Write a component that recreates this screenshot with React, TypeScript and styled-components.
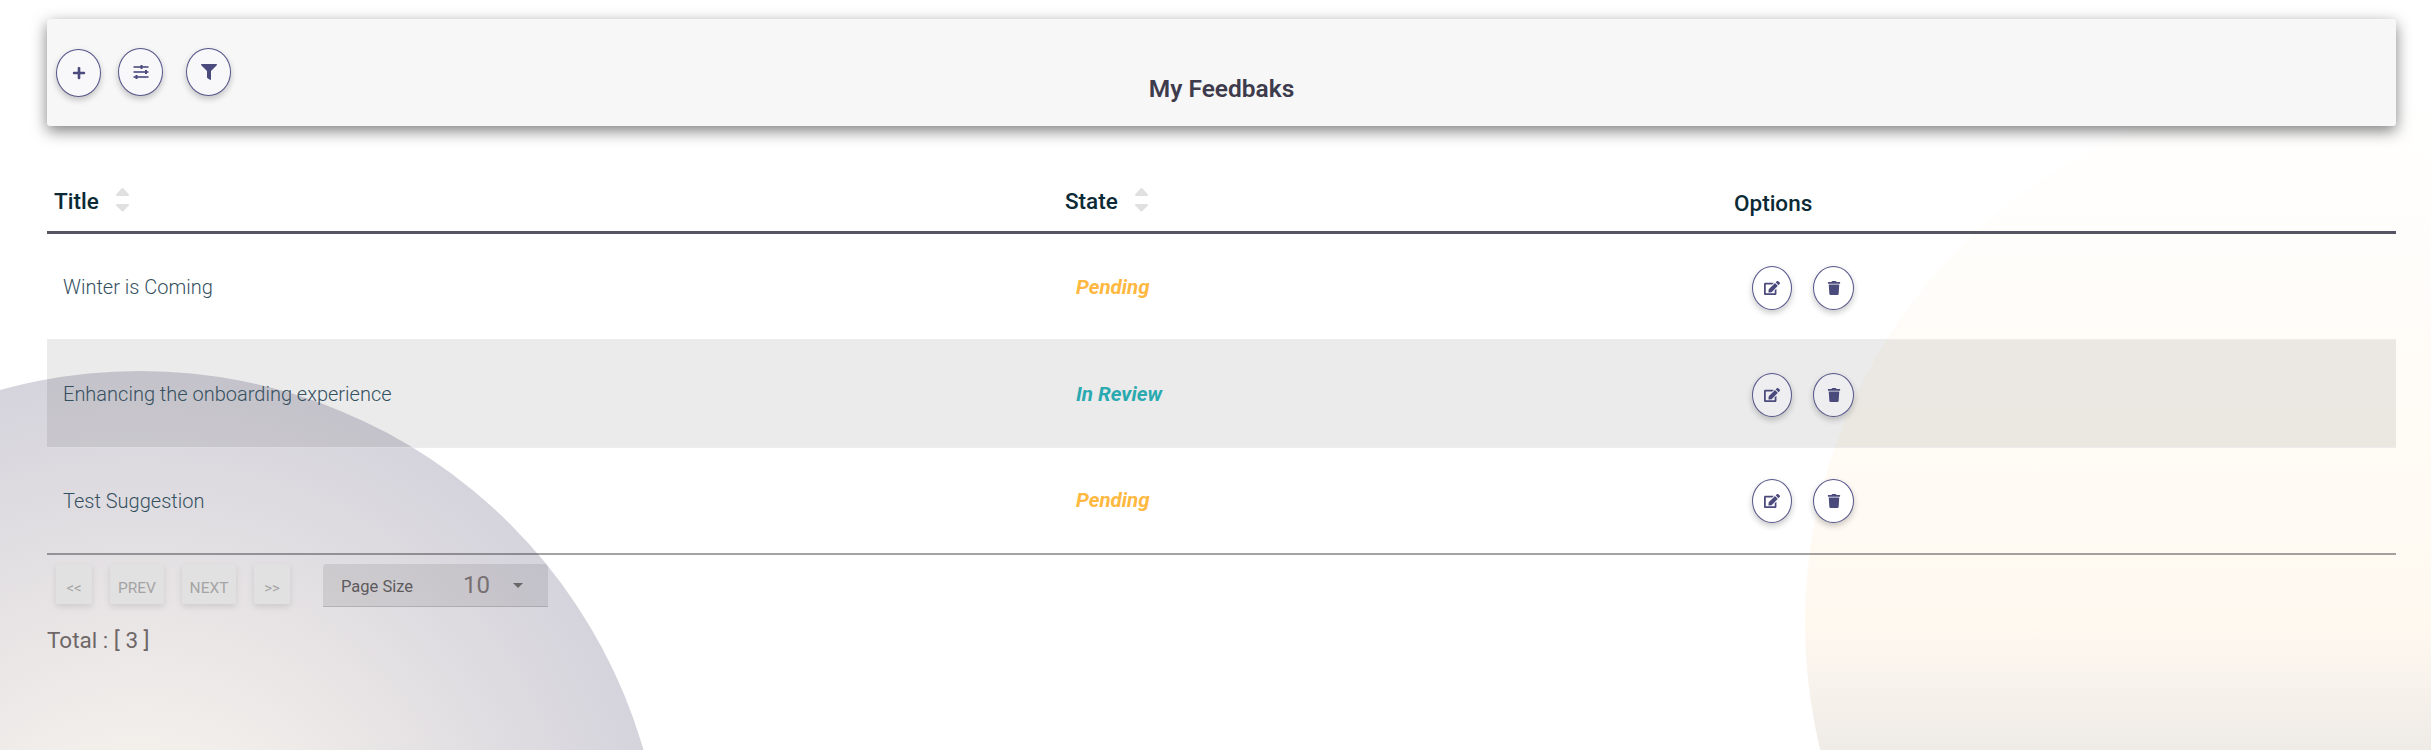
import styled, { createGlobalStyle } from "styled-components";
import { FaEdit, FaFilter, FaPlus, FaTrash } from "react-icons/fa";

const GlobalStyle = createGlobalStyle`
  html, body {
    margin: 0;
    padding: 0;
    background: #ffffff;
    font-family: Roboto, "Liberation Sans", sans-serif;
  }
`;

const Page = styled.div`
  position: relative;
  box-sizing: border-box;
  height: 750px;
  overflow: hidden;
  padding: 19px 35px 0 47px;
`;

const CircleLeft = styled.div`
  position: absolute;
  left: -384px;
  top: 371px;
  width: 1048px;
  height: 1048px;
  border-radius: 50%;
  background: radial-gradient(circle closest-side, #fffaf1 0%, #d5d3dc 100%);
`;

const CircleRight = styled.div`
  position: absolute;
  left: 1805px;
  top: 90px;
  width: 1066px;
  height: 1066px;
  border-radius: 50%;
  background: linear-gradient(180deg, #ffffff 0%, #fff9f0 50%, #bcbdc8 100%);
`;

const Content = styled.div`
  position: relative;
`;

const HeaderPanel = styled.div`
  position: relative;
  height: 107px;
  background: #f7f7f7;
  border-radius: 3px;
  box-shadow: 0 5px 15px rgba(0, 0, 0, 0.5);
`;

const ToolRow = styled.div`
  display: flex;
  align-items: flex-start;
  padding: 29px 0 0 9px;
`;

const CircleButton = styled.button<{ $w?: number; $h?: number; $mr?: number; $mt?: number }>`
  display: flex;
  align-items: center;
  justify-content: center;
  box-sizing: border-box;
  flex: none;
  padding: 0;
  width: ${(p) => p.$w ?? 45}px;
  height: ${(p) => p.$h ?? 48}px;
  margin-right: ${(p) => p.$mr ?? 0}px;
  margin-top: ${(p) => p.$mt ?? 0}px;
  border: 1px solid #55558a;
  border-radius: 50%;
  background: #f8f8fa;
  color: #4b4a7c;
  box-shadow: 0 3px 6px rgba(0, 0, 0, 0.22);
`;

const PanelTitle = styled.h1`
  position: absolute;
  left: 0;
  right: 0;
  top: 56px;
  margin: 0;
  text-align: center;
  font-size: 24.5px;
  line-height: 28px;
  font-weight: 600;
  color: #3d3b4c;
`;

const TableHead = styled.div`
  display: grid;
  grid-template-columns: 1011px 600px 1fr;
  box-sizing: border-box;
  height: 108px;
  border-bottom: 3px solid rgba(55, 55, 72, 0.85);
`;

const HeadCell = styled.div<{ $pl: number; $pt: number }>`
  display: flex;
  align-items: flex-start;
  gap: 16px;
  padding: ${(p) => p.$pt}px 0 0 ${(p) => p.$pl}px;
  font-size: 22.5px;
  line-height: 26px;
  font-weight: 500;
  color: #0b2a36;
`;

const SortIcon = styled.svg`
  display: block;
  width: 15px;
  height: 25px;
  margin-top: -1px;
  fill: #e0e0e0;
  stroke: #e0e0e0;
  stroke-width: 2;
  stroke-linejoin: round;
`;

const Row = styled.div<{ $striped?: boolean; $h: number }>`
  display: grid;
  grid-template-columns: 1011px 600px 1fr;
  align-items: center;
  box-sizing: border-box;
  height: ${(p) => p.$h}px;
  background: ${(p) => (p.$striped ? "rgba(0, 0, 0, 0.078)" : "transparent")};
  ${(p) =>
    p.$striped &&
    `
    border-top: 1px solid rgba(240, 240, 246, 0.5);
    border-bottom: 1px solid rgba(240, 240, 246, 0.5);
  `}
  ${CircleButton} {
    background: ${(p) => (p.$striped ? "#eeeef0" : "#ffffff")};
  }
`;

const TitleCell = styled.div`
  padding: 1px 0 0 16px;
  font-size: 20px;
  font-weight: 300;
  color: #35505f;
`;

const StateCell = styled.div<{ $color: string }>`
  padding-left: 18px;
  font-size: 20.5px;
  font-weight: 700;
  font-style: italic;
  color: ${(p) => p.$color};
`;

const OptionsCell = styled.div`
  display: flex;
  gap: 21px;
  padding: 2px 0 0 94px;
`;

const Pager = styled.div`
  display: flex;
  align-items: flex-start;
  border-top: 2px solid rgba(50, 50, 55, 0.45);
  padding: 9px 0 0 9px;
  margin-top: 1px;
`;

const PageButton = styled.button<{ $w: number; $mr: number; $fs: number }>`
  box-sizing: border-box;
  width: ${(p) => p.$w}px;
  height: 40px;
  margin-right: ${(p) => p.$mr}px;
  padding: 8px 0 0;
  border: none;
  border-radius: 3px;
  background: rgba(225, 224, 224, 0.85);
  box-shadow: 0 3px 6px rgba(0, 0, 0, 0.1);
  font-family: inherit;
  font-size: ${(p) => p.$fs}px;
  color: #a5a4a5;
`;

const PageSize = styled.div`
  display: flex;
  align-items: center;
  box-sizing: border-box;
  width: 225px;
  height: 43px;
  padding: 0 25px 0 18px;
  background: rgba(0, 0, 0, 0.085);
  border-bottom: 1px solid rgba(0, 0, 0, 0.13);
  border-radius: 4px 4px 0 0;
`;

const SizeLabel = styled.span`
  margin-top: 2px;
  font-size: 16.5px;
  color: #5d5a5e;
`;

const SizeValue = styled.span`
  margin-left: 50px;
  font-size: 24px;
  color: #777073;
`;

const Caret = styled.span`
  margin-left: auto;
  width: 0;
  height: 0;
  border-left: 5px solid transparent;
  border-right: 5px solid transparent;
  border-top: 5px solid #6b6668;
`;

const Total = styled.div`
  margin-top: 20px;
  font-size: 22.5px;
  line-height: 26px;
  font-weight: 400;
  color: #6f6767;
`;

const SlidersIcon = () => (
  <svg width="16" height="14" viewBox="0 0 16 14" fill="#4b4a7c">
    <rect x="0.5" y="1.2" width="15" height="1.6" />
    <rect x="0.5" y="6.2" width="15" height="1.6" />
    <rect x="0.5" y="11.2" width="15" height="1.6" />
    <rect x="7.5" y="0" width="2" height="4" />
    <rect x="12" y="5" width="2" height="4" />
    <rect x="2.5" y="10" width="2" height="4" />
  </svg>
);

const Sort = () => (
  <SortIcon viewBox="0 0 15 25">
    <path d="M7.5 2 L13 8 L2 8 Z" />
    <path d="M2 18 L13 18 L7.5 23.5 Z" />
  </SortIcon>
);

const rows = [
  { title: "Winter is Coming", state: "Pending", color: "#ffb840", h: 105 },
  { title: "Enhancing the onboarding experience", state: "In Review", color: "#2aa9b0", h: 109, striped: true },
  { title: "Test Suggestion", state: "Pending", color: "#ffb840", h: 104 },
];

export default function App() {
  return (
    <>
      <GlobalStyle />
      <Page>
        <CircleLeft />
        <CircleRight />
        <Content>
          <HeaderPanel>
            <ToolRow>
              <CircleButton $mr={17} $mt={1}>
                <FaPlus size={14} />
              </CircleButton>
              <CircleButton $mr={23}>
                <SlidersIcon />
              </CircleButton>
              <CircleButton>
                <FaFilter size={16} />
              </CircleButton>
            </ToolRow>
            <PanelTitle>My Feedbaks</PanelTitle>
          </HeaderPanel>
          <TableHead>
            <HeadCell $pl={7} $pt={62}>
              Title <Sort />
            </HeadCell>
            <HeadCell $pl={7} $pt={62}>
              State <Sort />
            </HeadCell>
            <HeadCell $pl={76} $pt={64}>
              Options
            </HeadCell>
          </TableHead>
          {rows.map((r) => (
            <Row key={r.title} $striped={r.striped} $h={r.h}>
              <TitleCell>{r.title}</TitleCell>
              <StateCell $color={r.color}>{r.state}</StateCell>
              <OptionsCell>
                <CircleButton $w={40} $h={44}>
                  <FaEdit size={16} />
                </CircleButton>
                <CircleButton $w={41} $h={44}>
                  <FaTrash size={14} />
                </CircleButton>
              </OptionsCell>
            </Row>
          ))}
          <Pager>
            <PageButton $w={36} $mr={18} $fs={15}>{"<<"}</PageButton>
            <PageButton $w={54} $mr={18} $fs={15.5}>PREV</PageButton>
            <PageButton $w={54} $mr={18} $fs={15.5}>NEXT</PageButton>
            <PageButton $w={36} $mr={33} $fs={15}>{">>"}</PageButton>
            <PageSize>
              <SizeLabel>Page Size</SizeLabel>
              <SizeValue>10</SizeValue>
              <Caret />
            </PageSize>
          </Pager>
          <Total>Total : [ 3 ]</Total>
        </Content>
      </Page>
    </>
  );
}
